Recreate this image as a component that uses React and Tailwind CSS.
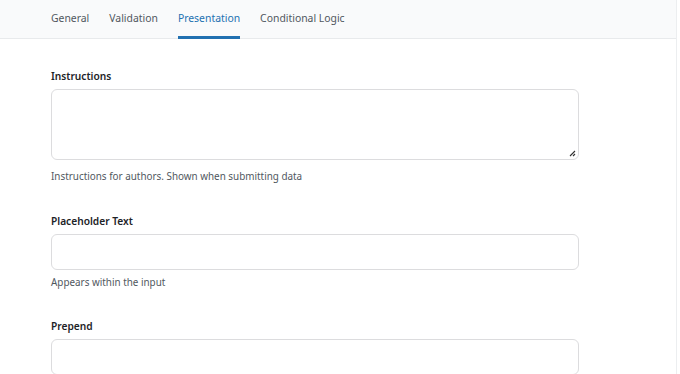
import React from "react";

const font = { fontFamily: '"Noto Sans", "Open Sans", sans-serif' };

function Field({ label, children, help, className }) {
  return (
    <div className={className}>
      <div className="h-[16px] text-[10.2px] leading-[16px] font-semibold text-[#1d2327]">{label}</div>
      {children}
      {help}
    </div>
  );
}

export default function App() {
  return (
    <div className="w-[680px] h-[374px] overflow-hidden bg-white" style={font}>
      <div className="w-[677px] h-full border-r border-[#eceef0] bg-white">
        <div className="h-[39px] bg-[#f9fafb] border-b border-[#e8eaec] flex pl-[51px] gap-[20px] text-[10.4px]">
          <div className="relative flex items-center text-[#50575e]">General</div>
          <div className="relative flex items-center text-[#50575e]">Validation</div>
          <div className="relative flex items-center text-[#2271b1]">
            Presentation
            <div className="absolute left-0 right-0 bottom-[-1px] h-[3px] bg-[#2271b1]" />
          </div>
          <div className="relative flex items-center text-[#50575e]">Conditional Logic</div>
        </div>
        <div className="pl-[51px] pt-[29px]">
          <Field
            label="Instructions"
            help={<div className="mt-[8px] h-[16px] text-[9.9px] leading-[16px] text-[#50575e]">Instructions for authors. Shown when submitting data</div>}
          >
            <div className="relative mt-[5px] w-[528px] h-[71px] border border-[#dcdcde] rounded-[6px] bg-white">
              <svg className="absolute right-[2px] bottom-[2px]" width="8" height="8" viewBox="0 0 8 8">
                <path d="M7 2 L2 7 M7 5 L5 7" stroke="#333" strokeWidth="1.1" fill="none" />
              </svg>
            </div>
          </Field>
          <Field
            className="mt-[29px]"
            label="Placeholder Text"
            help={<div className="mt-[4px] h-[16px] text-[9.9px] leading-[16px] text-[#50575e]">Appears within the input</div>}
          >
            <div className="mt-[5px] w-[528px] h-[36px] border border-[#dcdcde] rounded-[6px] bg-white" />
          </Field>
          <Field className="mt-[28px]" label="Prepend">
            <div className="mt-[5px] w-[528px] h-[36px] border border-[#dcdcde] rounded-[6px] bg-white" />
          </Field>
        </div>
      </div>
    </div>
  );
}
